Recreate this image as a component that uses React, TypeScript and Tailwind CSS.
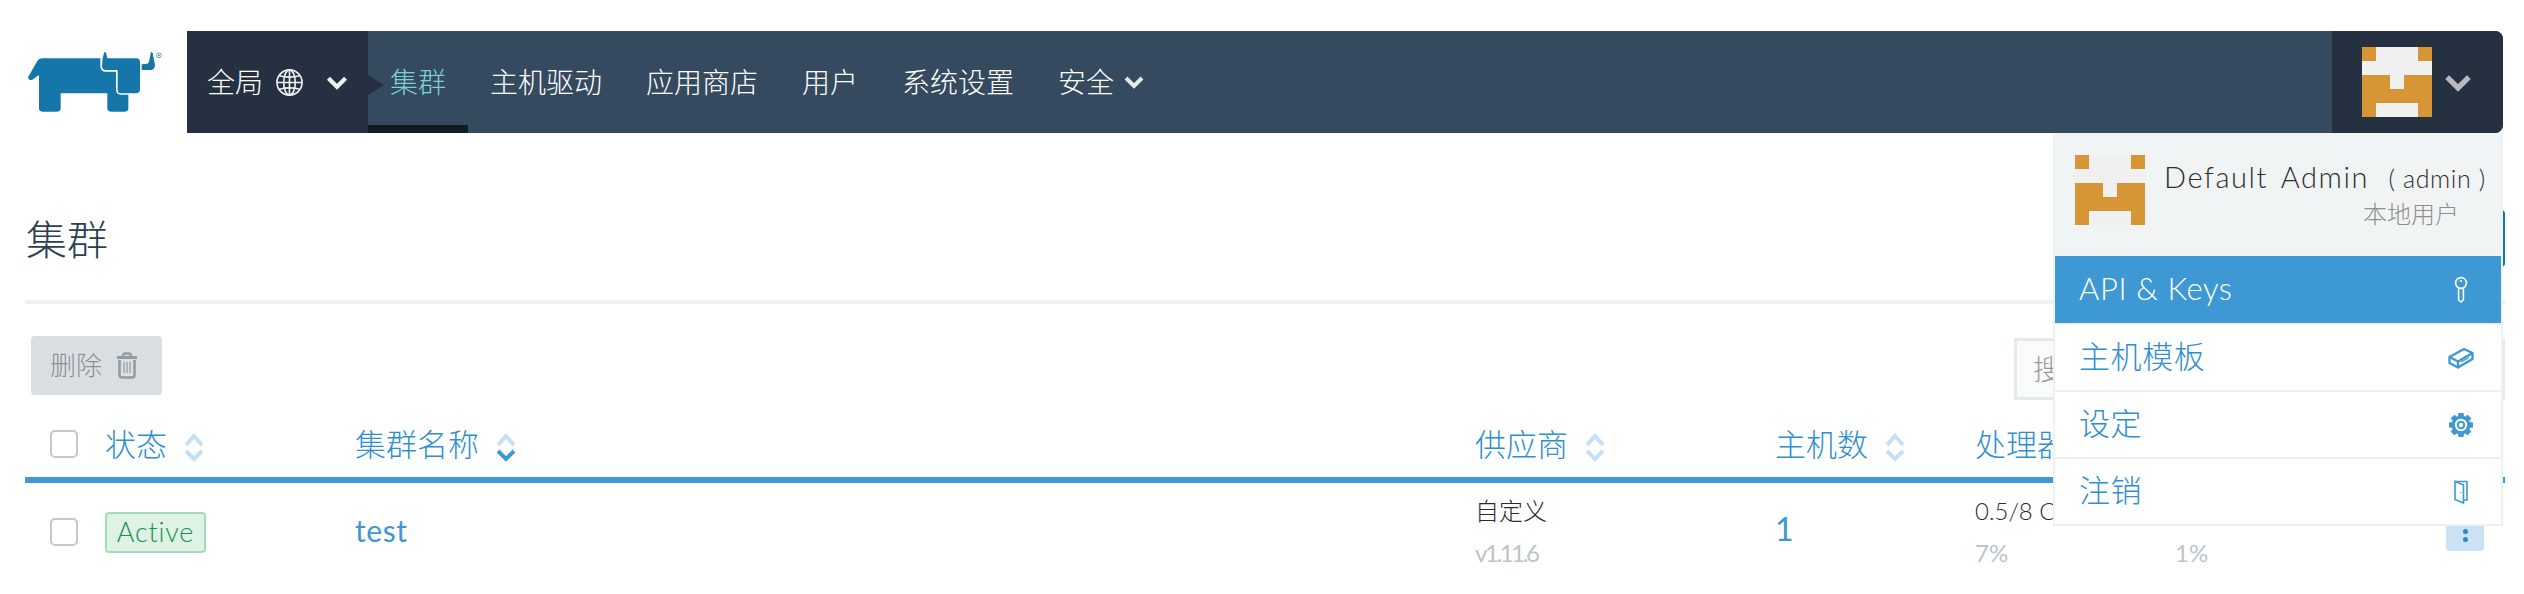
const FONT = 'font-["Lato","Noto_Sans_CJK_SC",sans-serif]';

function Chevron({ className }: { className: string }) {
  return (
    <svg viewBox="0 0 20 14" className={className} fill="none" stroke="currentColor" strokeWidth="4">
      <polyline points="2,3 10,11 18,3" />
    </svg>
  );
}

function SortIcon({ active }: { active?: boolean }) {
  return (
    <svg viewBox="0 0 20 29" className="w-[20px] h-[29px] ml-[17px] mt-[6px] shrink-0" fill="none" strokeWidth="4">
      <polyline points="2,12 10,3 18,12" stroke="#c5e0f4" />
      <polyline points="2,18 10,26 18,18" stroke={active ? '#3d98d3' : '#c5e0f4'} />
    </svg>
  );
}

function Logo() {
  return (
    <svg viewBox="0 0 450 225" className="w-[150px] h-[75px] ml-[20px] mt-[14px]" fill="#1476a9">
      <path d="M25 95 L52 48 Q56 40 66 40 L241 40 L241 65 Q243 80 257 80 L288 80 L288 135 Q290 149 302 149 L325 149 L325 190 Q325 200 315 200 L272 200 Q262 200 262 190 L262 145 L122 145 L122 190 Q122 200 112 200 L67 200 Q57 200 57 190 L57 90 L36 105 Q22 105 25 95 Z" />
      <path d="M248 40 L252 24 Q255 18 258 24 L262 40 L348 40 Q360 40 360 52 L360 133 Q360 145 348 145 L303 145 Q293 145 293 135 L293 75 L258 75 Q246 75 246 62 Z" />
      <path d="M365 75 L365 58 L382 56 Q386 55 388 46 L392 24 Q395 18 398 24 L405 60 Q405 75 390 75 Z" />
      <circle cx="417" cy="31" r="7" fill="none" stroke="#1476a9" strokeWidth="2" />
      <circle cx="417" cy="31" r="2.5" />
    </svg>
  );
}

const AVATAR_CELLS = [1, 0, 0, 0, 1, 0, 0, 0, 0, 0, 1, 1, 0, 1, 1, 1, 1, 1, 1, 1, 1, 0, 0, 0, 1];

function Avatar() {
  return (
    <div className="grid grid-cols-5 w-[70px] h-[70px] shrink-0">
      {AVATAR_CELLS.map((c, i) => (
        <div key={i} className={c ? 'bg-[#d69636]' : 'bg-[#f0f0f0]'} />
      ))}
    </div>
  );
}

function Globe() {
  return (
    <svg viewBox="0 0 30 30" className="w-[29px] h-[29px] ml-[12px]" fill="none" stroke="#eef0f2" strokeWidth="1.7">
      <circle cx="15" cy="15" r="13" />
      <ellipse cx="15" cy="15" rx="6" ry="13" />
      <line x1="15" y1="2" x2="15" y2="28" />
      <line x1="2" y1="15" x2="28" y2="15" />
      <path d="M4.5 8 Q15 11 25.5 8 M4.5 22 Q15 19 25.5 22" />
    </svg>
  );
}

function KeyIcon() {
  return (
    <svg viewBox="0 0 14 28" className="w-[14px] h-[28px]" fill="none" stroke="#fff" strokeWidth="1.6">
      <circle cx="7" cy="7" r="5.4" />
      <circle cx="7" cy="5" r="1" fill="#fff" stroke="none" />
      <path d="M4.6 12 L4.6 24 L7 26 L9.4 24 L9.4 12" />
    </svg>
  );
}

function DriveIcon() {
  return (
    <svg viewBox="0 0 26 22" className="w-[26px] h-[22px]" fill="none" stroke="#3d98d3" strokeWidth="2.4" strokeLinejoin="round">
      <path d="M1.5 10 L16 2 L24.5 6 L24.5 12 L10 20.5 L1.5 16 Z" />
      <path d="M1.5 10 L10 14.5 L24.5 6 M10 14.5 L10 20.5" />
      <path d="M13 15 L21 10.5" strokeWidth="1.4" />
    </svg>
  );
}

const GEAR_TEETH = [0, 45, 90, 135, 180, 225, 270, 315];

function GearIcon() {
  return (
    <svg viewBox="0 0 26 26" className="w-[26px] h-[26px]">
      {GEAR_TEETH.map((a) => (
        <rect key={a} x="10.2" y="1" width="5.6" height="6" rx="1" fill="#3d98d3" transform={`rotate(${a} 13 13)`} />
      ))}
      <circle cx="13" cy="13" r="9.4" fill="#3d98d3" />
      <circle cx="13" cy="13" r="6.2" fill="#fff" />
      <circle cx="13" cy="13" r="3.2" fill="#fff" stroke="#3d98d3" strokeWidth="2" />
    </svg>
  );
}

function DoorIcon() {
  return (
    <svg viewBox="0 0 14 24" className="w-[14px] h-[24px]" fill="none" stroke="#3d98d3" strokeWidth="1.6">
      <path d="M1 1.5 L13 1.5 L13 20 L9.5 20" />
      <path d="M1 1.5 L9.5 5 L9.5 23 L1 19.5 Z" fill="#fff" />
      <circle cx="7" cy="12.5" r="0.7" fill="#3d98d3" stroke="none" />
    </svg>
  );
}

function TrashIcon() {
  return (
    <svg viewBox="0 0 22 27" className="w-[22px] h-[27px] ml-[14px]" fill="none" stroke="#8f9ca6">
      <path d="M7 4 Q7 1.5 9.5 1.5 L12.5 1.5 Q15 1.5 15 4" strokeWidth="2.4" />
      <line x1="1" y1="5.5" x2="21" y2="5.5" strokeWidth="3" />
      <path d="M3.5 8 L3.5 23 Q3.5 25.5 6 25.5 L16 25.5 Q18.5 25.5 18.5 23 L18.5 8" strokeWidth="2.6" />
      <path d="M8 10 L8 21 M11 10 L11 21 M14 10 L14 21" strokeWidth="1.2" />
    </svg>
  );
}

function Checkbox() {
  return <div className="w-[28px] h-[28px] ml-[25px] rounded-[5px] border-2 border-[#c4c8cb] bg-white" />;
}

const NAV_ITEMS = ['主机驱动', '应用商店', '用户', '系统设置'];
const COLS = 'grid grid-cols-[80px_250px_1120px_300px_200px_200px_1fr]';

function HeadCell({ label, active }: { label: string; active?: boolean }) {
  return (
    <div className="flex items-center text-[31px] font-light text-[#2f8fd0] whitespace-nowrap">
      {label}
      <SortIcon active={active} />
    </div>
  );
}

function TwoLine({ top, bottom, tight }: { top: string; bottom: string; tight?: boolean }) {
  return (
    <div className="leading-[42px]">
      <div className="text-[24px] font-light text-[#2b2b2b] whitespace-nowrap">{top}</div>
      <div className={`text-[24px] text-[#bcc4ca] whitespace-nowrap ${tight ? 'tracking-[-2.4px]' : ''}`}>{bottom}</div>
    </div>
  );
}

function MenuItem({ label, icon, active }: { label: string; icon: React.ReactNode; active?: boolean }) {
  return (
    <div
      className={`flex items-center justify-between h-[67px] pl-[24px] pr-[26px] text-[31px] font-light tracking-[0.6px] ${
        active ? 'bg-[#3d98d3] text-white' : 'bg-white text-[#2f8fd0] border-t-2 border-[#edf1f2]'
      }`}
    >
      <span className="mb-[3px]">{label}</span>
      <span className="w-[28px] flex justify-center">{icon}</span>
    </div>
  );
}

export default function App() {
  return (
    <div className={`relative w-[2524px] h-[594px] overflow-hidden bg-white ${FONT}`}>
      {/* Top bar */}
      <div className="flex pt-[31px]">
        <div className="w-[187px] shrink-0">
          <Logo />
        </div>
        <div className="flex w-[2316px] h-[102px] bg-[#354a5f] rounded-r-[8px] overflow-hidden font-light">
          <div className="flex items-center w-[181px] pl-[20px] bg-[#253140] text-white text-[28px]">
            全局
            <Globe />
            <Chevron className="w-[22px] h-[15px] ml-[22px] text-[#eef0f2]" />
          </div>
          <div className="relative flex items-center px-[22px] pt-[8px] text-[28px] text-[#7fd0d6] border-b-[8px] border-[#131a21]">
            <div className="absolute left-0 top-[44px] border-y-[10px] border-y-transparent border-l-[16px] border-l-[#253140]" />
            集群
          </div>
          {NAV_ITEMS.map((n) => (
            <div key={n} className="flex items-center px-[22px] text-[28px] text-white">
              {n}
            </div>
          ))}
          <div className="flex items-center px-[22px] text-[28px] text-white">
            安全
            <Chevron className="w-[20px] h-[14px] ml-[10px] text-[#e4e8eb]" />
          </div>
          <div className="flex items-center ml-auto w-[171px] pl-[30px] bg-[#253140]">
            <Avatar />
            <Chevron className="w-[28px] h-[19px] ml-[12px] text-[#b5babd]" />
          </div>
        </div>
      </div>

      {/* Page */}
      <div className="w-[2505px] pl-[25px]">
        <div className="flex items-center justify-between h-[60px] mt-[77px]">
          <h1 className="text-[41px] font-light text-[#2c3f52] ml-[1px]">集群</h1>
          <div className="w-[200px] h-[57px] mb-[3px] rounded-[4px] bg-[#1476a9]" />
        </div>
        <div className="h-[4px] mt-[30px] bg-[#eff2f3]" />

        <div className="flex justify-between h-[64px] mt-[32px]">
          <div className="flex items-center h-[59px] ml-[6px] pl-[19px] pr-[24px] rounded-[4px] bg-[#dcdfe2] text-[26px] font-light text-[#87929b]">
            删除
            <TrashIcon />
          </div>
          <div className="w-[491px] h-[62px] mt-[2px] pl-[16px] flex items-center border-[3px] border-[#e5eaed] bg-[#fafbfb] text-[28px] font-light text-[#999999]">
            搜索
          </div>
        </div>

        <div className={`${COLS} items-center h-[77px] pt-[11px]`}>
          <Checkbox />
          <HeadCell label="状态" />
          <HeadCell label="集群名称" active />
          <HeadCell label="供应商" />
          <HeadCell label="主机数" />
          <HeadCell label="处理器" />
          <HeadCell label="内存" />
        </div>
        <div className="h-[6px] bg-[#3d98d3]" />

        <div className={`${COLS} items-center h-[98px]`}>
          <Checkbox />
          <div>
            <span className="inline-flex items-center justify-center w-[101px] h-[41px] rounded-[4px] border-2 border-[#a4dbb8] bg-[#dff2e6] text-[27px] font-light tracking-[0.8px] text-[#14944a]">
              Active
            </span>
          </div>
          <div className="text-[30px] tracking-[0.6px] text-[#3d98d3] mb-[4px]">test</div>
          <TwoLine top="自定义" bottom="v1.11.6" tight />
          <div className="text-[32px] text-[#3d98d3] mb-[6px]">1</div>
          <TwoLine top="0.5/8 Core" bottom="7%" />
          <div className="flex items-center justify-between pr-[21px]">
            <TwoLine top="0.1/16 GiB" bottom="1%" />
            <div className="flex flex-col items-center justify-center gap-[3px] w-[38px] h-[39px] rounded-[4px] bg-[#cbe2f5] mb-[1px]">
              <div className="w-[5px] h-[5px] rounded-full bg-[#2f86c9]" />
              <div className="w-[5px] h-[5px] rounded-full bg-[#2f86c9]" />
              <div className="w-[5px] h-[5px] rounded-full bg-[#2f86c9]" />
            </div>
          </div>
        </div>
      </div>

      {/* User dropdown, open over the page */}
      <div className="absolute left-[2053px] top-[133px] w-[450px] border-x-2 border-b-2 border-[#edf1f2] bg-white">
        <div className="flex h-[123px] pt-[22px] pl-[20px] pr-[8px] bg-[#f1f4f5]">
          <Avatar />
          <div className="ml-[19px] flex-1">
            <div className="text-[29px] font-light leading-[36px] text-[#2e2e2e] tracking-[1.6px] [word-spacing:4px] whitespace-nowrap mt-[4px]">
              Default Admin{' '}
              <span className="text-[25px] font-light ml-[6px] tracking-[0.6px] [word-spacing:0px]">( admin )</span>
            </div>
            <div className="text-right pr-[34px] text-[24px] font-light leading-[36px] text-[#8f8f8f]">本地用户</div>
          </div>
        </div>
        <MenuItem label="API & Keys" icon={<KeyIcon />} active />
        <MenuItem label="主机模板" icon={<DriveIcon />} />
        <MenuItem label="设定" icon={<GearIcon />} />
        <MenuItem label="注销" icon={<DoorIcon />} />
      </div>
    </div>
  );
}
